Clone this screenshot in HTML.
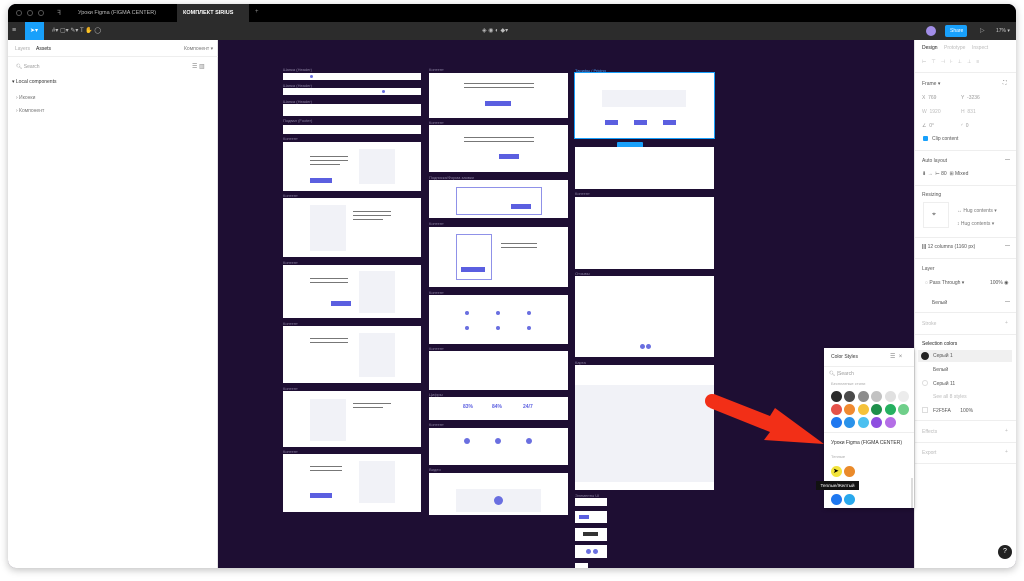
<!DOCTYPE html><html><head><meta charset="utf-8"><style>
*{margin:0;padding:0;box-sizing:border-box}
body{width:1024px;height:581px;background:#fff;position:relative;overflow:hidden;font-family:"Liberation Sans",sans-serif;}
.a{position:absolute}
.win{position:absolute;left:8px;top:4px;width:1008px;height:564px;border-radius:8px;overflow:hidden;background:#1e0e33;box-shadow:0 2px 8px rgba(0,0,0,.25)}
.t{font-size:5px;color:#333;white-space:nowrap}
.lb{position:absolute;font-size:4px;color:#8a80a0;white-space:nowrap}
.fr{position:absolute;background:#fff}
.ph{position:absolute;background:#f1f2f7}
.bt{position:absolute;background:#5b5fe0}
.ln{position:absolute;background:#777;height:1px}
.c{position:absolute;width:11px;height:11px;border-radius:50%}
.rp .t{color:#555}
</style></head><body>
<div class="win">
 <div class="a" style="left:0;top:0;width:1008px;height:18px;background:#000"></div>
 <div class="a" style="left:8px;top:6px;width:6px;height:6px;border:1px solid #555;border-radius:50%"></div>
 <div class="a" style="left:19px;top:6px;width:6px;height:6px;border:1px solid #555;border-radius:50%"></div>
 <div class="a" style="left:30px;top:6px;width:6px;height:6px;border:1px solid #555;border-radius:50%"></div>
 <div class="a t" style="left:49px;top:5px;color:#888;font-size:7px">ꟻ</div>
 <div class="a t" style="left:70px;top:6px;color:#bbb;font-size:5.5px">Уроки Figma (FIGMA CENTER)</div>
 <div class="a" style="left:169px;top:0;width:72px;height:18px;background:#2c2c2c"></div>
 <div class="a t" style="left:175px;top:6px;color:#fff;font-size:5.5px;font-weight:bold">КОМПЛЕКТ SIRIUS</div>
 <div class="a t" style="left:247px;top:5px;color:#888;font-size:6px">+</div>
 <div class="a" style="left:0;top:18px;width:1008px;height:18px;background:#2c2c2c"></div>
 <div class="a t" style="left:4px;top:23px;color:#ccc;font-size:7px">≡</div>
 <div class="a" style="left:17px;top:18px;width:19px;height:18px;background:#18a0fb"></div>
 <div class="a t" style="left:22px;top:23px;color:#fff;font-size:6px">➤▾</div>
 <div class="a t" style="left:44px;top:23px;color:#bbb;font-size:6px">#▾ ▢▾ ✎▾ T ✋ ◯</div>
 <div class="a t" style="left:474px;top:23px;color:#bbb;font-size:6px">◈ ◉ ◐ ◆▾</div>
 <div class="a" style="left:918px;top:22px;width:10px;height:10px;border-radius:50%;background:#a28ee8"></div>
 <div class="a" style="left:937px;top:21px;width:22px;height:12px;border-radius:2px;background:#18a0fb"></div>
 <div class="a t" style="left:942px;top:24px;color:#fff;font-size:5px">Share</div>
 <div class="a t" style="left:972px;top:23px;color:#aaa;font-size:6px">▷</div>
 <div class="a t" style="left:988px;top:24px;color:#ccc;font-size:5px">17% ▾</div>
 <div class="a" style="left:0;top:36px;width:210px;height:528px;background:#fff;border-right:1px solid #e5e5e5"></div>
 <div class="a t" style="left:7px;top:42px;color:#aaa">Layers</div>
 <div class="a t" style="left:28px;top:42px;color:#222">Assets</div>
 <div class="a t" style="left:176px;top:42px;color:#777">Компонент ▾</div>
 <div class="a" style="left:0;top:52px;width:210px;height:1px;background:#eee"></div>
 <div class="a t" style="left:8px;top:60px;color:#999">🔍︎ Search</div>
 <div class="a t" style="left:184px;top:59px;color:#888;font-size:6px">☰ ▥</div>
 <div class="a t" style="left:4px;top:75px;color:#333">▾ Local components</div>
 <div class="a t" style="left:8px;top:91px;color:#777">› Иконки</div>
 <div class="a t" style="left:8px;top:104px;color:#777">› Компонент</div>
 <div class="a rp" style="left:906px;top:36px;width:102px;height:528px;background:#fff;border-left:1px solid #e5e5e5">
  <div class="a t" style="left:7px;top:5px;color:#222">Design</div>
  <div class="a t" style="left:29px;top:5px;color:#bbb">Prototype</div>
  <div class="a t" style="left:57px;top:5px;color:#bbb">Inspect</div>
  <div class="a t" style="left:7px;top:19px;color:#bbb;letter-spacing:5px">⊢⊤⊣⊦⊥⊥≡</div>
  <div class="a" style="left:0;top:32px;width:102px;height:1px;background:#eee"></div>
  <div class="a t" style="left:7px;top:41px">Frame ▾</div><div class="a t" style="left:88px;top:40px">⛶</div>
  <div class="a t" style="left:7px;top:55px;color:#999">X &nbsp;769</div><div class="a t" style="left:46px;top:55px;color:#999">Y &nbsp;-3236</div>
  <div class="a t" style="left:7px;top:69px;color:#bbb">W &nbsp;1920</div><div class="a t" style="left:46px;top:69px;color:#bbb">H &nbsp;831</div>
  <div class="a t" style="left:7px;top:83px;color:#999">∠ &nbsp;0°</div><div class="a t" style="left:46px;top:83px;color:#999">◜ &nbsp;0</div>
  <div class="a" style="left:8px;top:96px;width:5px;height:5px;background:#18a0fb;border-radius:1px"></div>
  <div class="a t" style="left:17px;top:96px">Clip content</div>
  <div class="a" style="left:0;top:110px;width:102px;height:1px;background:#eee"></div>
  <div class="a t" style="left:7px;top:118px">Auto layout</div><div class="a t" style="left:90px;top:117px">—</div>
  <div class="a t" style="left:7px;top:131px">⬇ → &nbsp;⊢ 80 &nbsp;⊞ Mixed</div>
  <div class="a" style="left:0;top:145px;width:102px;height:1px;background:#eee"></div>
  <div class="a t" style="left:7px;top:152px">Resizing</div>
  <div class="a" style="left:8px;top:162px;width:26px;height:26px;border:1px solid #eee"></div>
  <div class="a t" style="left:17px;top:171px;font-size:7px">⌖</div>
  <div class="a t" style="left:42px;top:168px;color:#777">↔ Hug contents ▾</div>
  <div class="a t" style="left:42px;top:181px;color:#777">↕ Hug contents ▾</div>
  <div class="a" style="left:0;top:197px;width:102px;height:1px;background:#eee"></div>
  <div class="a t" style="left:7px;top:204px"><b>|||</b> 12 columns (1160 px)</div><div class="a t" style="left:90px;top:203px">—</div>
  <div class="a" style="left:0;top:218px;width:102px;height:1px;background:#eee"></div>
  <div class="a t" style="left:7px;top:226px">Layer</div>
  <div class="a t" style="left:10px;top:240px">◌ Pass Through ▾</div><div class="a t" style="left:75px;top:240px">100% ◉</div>
  <div class="a t" style="left:17px;top:260px">Белый</div><div class="a t" style="left:90px;top:259px">—</div>
  <div class="a" style="left:0;top:272px;width:102px;height:1px;background:#eee"></div>
  <div class="a t" style="left:7px;top:281px;color:#bbb">Stroke</div><div class="a t" style="left:90px;top:280px;color:#bbb">+</div>
  <div class="a" style="left:0;top:294px;width:102px;height:1px;background:#eee"></div>
  <div class="a t" style="left:7px;top:301px;color:#222">Selection colors</div>
  <div class="a" style="left:3px;top:310px;width:94px;height:12px;background:#f0f0f0"></div>
  <div class="a" style="left:6px;top:312px;width:8px;height:8px;border-radius:50%;background:#222"></div>
  <div class="a t" style="left:18px;top:313px">Серый 1</div>
  <div class="a t" style="left:18px;top:327px">Белый</div>
  <div class="a" style="left:7px;top:340px;width:6px;height:6px;border:1px solid #ddd;border-radius:50%"></div>
  <div class="a t" style="left:18px;top:341px">Серый 11</div>
  <div class="a t" style="left:18px;top:354px;color:#bbb">See all 8 styles</div>
  <div class="a" style="left:7px;top:367px;width:6px;height:6px;border:1px solid #ddd"></div>
  <div class="a t" style="left:18px;top:368px">F2F5FA &nbsp;&nbsp;&nbsp;&nbsp;&nbsp;&nbsp;100%</div>
  <div class="a" style="left:0;top:380px;width:102px;height:1px;background:#eee"></div>
  <div class="a t" style="left:7px;top:389px;color:#bbb">Effects</div><div class="a t" style="left:90px;top:388px;color:#bbb">+</div>
  <div class="a" style="left:0;top:402px;width:102px;height:1px;background:#eee"></div>
  <div class="a t" style="left:7px;top:410px;color:#bbb">Export</div><div class="a t" style="left:90px;top:409px;color:#bbb">+</div>
  <div class="a" style="left:0;top:423px;width:102px;height:1px;background:#eee"></div>
  <div class="a" style="left:83px;top:505px;width:14px;height:14px;border-radius:50%;background:#222;color:#fff;font-size:7px;text-align:center;line-height:14px">?</div>
 </div>
</div>

<div class="a" style="left:0;top:0">
 <!-- column 1 -->
 <div class="lb" style="left:283px;top:67px">Шапка (Header)</div><div class="fr" style="left:283px;top:73px;width:138px;height:7px"><div class="c" style="left:27px;top:2px;width:3px;height:3px;background:#6a6fe0"></div></div>
 <div class="lb" style="left:283px;top:83px">Шапка (Header)</div><div class="fr" style="left:283px;top:88px;width:138px;height:7px"><div class="c" style="left:99px;top:2px;width:3px;height:3px;background:#6a6fe0"></div></div>
 <div class="lb" style="left:283px;top:99px">Шапка (Header)</div><div class="fr" style="left:283px;top:104px;width:138px;height:12px"></div>
 <div class="lb" style="left:283px;top:118px">Подвал (Footer)</div><div class="fr" style="left:283px;top:125px;width:138px;height:9px"></div>
 <div class="lb" style="left:283px;top:136px">Контент</div>
 <div class="fr" style="left:283px;top:142px;width:138px;height:49px"><div class="ph" style="left:76px;top:7px;width:36px;height:35px"></div><div class="ln" style="left:27px;top:14px;width:38px"></div><div class="ln" style="left:27px;top:18px;width:38px"></div><div class="ln" style="left:27px;top:22px;width:30px"></div><div class="bt" style="left:27px;top:36px;width:22px;height:5px"></div></div>
 <div class="lb" style="left:283px;top:193px">Контент</div>
 <div class="fr" style="left:283px;top:198px;width:138px;height:59px"><div class="ph" style="left:27px;top:7px;width:36px;height:46px"></div><div class="ln" style="left:70px;top:13px;width:38px"></div><div class="ln" style="left:70px;top:17px;width:38px"></div><div class="ln" style="left:70px;top:21px;width:30px"></div></div>
 <div class="lb" style="left:283px;top:260px">Контент</div>
 <div class="fr" style="left:283px;top:265px;width:138px;height:53px"><div class="ph" style="left:76px;top:6px;width:36px;height:42px"></div><div class="ln" style="left:27px;top:13px;width:38px"></div><div class="ln" style="left:27px;top:17px;width:38px"></div><div class="bt" style="left:48px;top:36px;width:20px;height:5px"></div></div>
 <div class="lb" style="left:283px;top:321px">Контент</div>
 <div class="fr" style="left:283px;top:326px;width:138px;height:57px"><div class="ph" style="left:76px;top:7px;width:36px;height:44px"></div><div class="ln" style="left:27px;top:12px;width:38px"></div><div class="ln" style="left:27px;top:16px;width:38px"></div></div>
 <div class="lb" style="left:283px;top:386px">Контент</div>
 <div class="fr" style="left:283px;top:391px;width:138px;height:56px"><div class="ph" style="left:27px;top:8px;width:36px;height:42px"></div><div class="ln" style="left:70px;top:12px;width:38px"></div><div class="ln" style="left:70px;top:16px;width:30px"></div></div>
 <div class="lb" style="left:283px;top:449px">Контент</div>
 <div class="fr" style="left:283px;top:454px;width:138px;height:58px"><div class="ph" style="left:76px;top:7px;width:36px;height:42px"></div><div class="ln" style="left:27px;top:12px;width:32px"></div><div class="ln" style="left:27px;top:16px;width:32px"></div><div class="bt" style="left:27px;top:39px;width:22px;height:5px"></div></div>
 <!-- column 2 -->
 <div class="lb" style="left:429px;top:67px">Контент</div>
 <div class="fr" style="left:429px;top:73px;width:139px;height:45px"><div class="ln" style="left:35px;top:10px;width:70px"></div><div class="ln" style="left:35px;top:14px;width:70px"></div><div class="bt" style="left:56px;top:28px;width:26px;height:5px"></div></div>
 <div class="lb" style="left:429px;top:120px">Контент</div>
 <div class="fr" style="left:429px;top:125px;width:139px;height:47px"><div class="ln" style="left:35px;top:12px;width:70px"></div><div class="ln" style="left:35px;top:16px;width:70px"></div><div class="bt" style="left:70px;top:29px;width:20px;height:5px"></div></div>
 <div class="lb" style="left:429px;top:175px">Подписка/Форма заявки</div>
 <div class="fr" style="left:429px;top:180px;width:139px;height:38px"><div class="a" style="left:27px;top:7px;width:86px;height:28px;border:1px solid #8f91e8"></div><div class="bt" style="left:82px;top:24px;width:20px;height:5px"></div></div>
 <div class="lb" style="left:429px;top:221px">Контент</div>
 <div class="fr" style="left:429px;top:227px;width:139px;height:60px"><div class="a" style="left:27px;top:7px;width:36px;height:46px;border:1px solid #8f91e8"></div><div class="bt" style="left:32px;top:40px;width:24px;height:5px"></div><div class="ln" style="left:72px;top:16px;width:36px"></div><div class="ln" style="left:72px;top:20px;width:36px"></div></div>
 <div class="lb" style="left:429px;top:290px">Контент</div>
 <div class="fr" style="left:429px;top:295px;width:139px;height:49px"><div class="c" style="left:36px;top:16px;width:4px;height:4px;background:#6a6fe0"></div><div class="c" style="left:67px;top:16px;width:4px;height:4px;background:#6a6fe0"></div><div class="c" style="left:98px;top:16px;width:4px;height:4px;background:#6a6fe0"></div><div class="c" style="left:36px;top:31px;width:4px;height:4px;background:#6a6fe0"></div><div class="c" style="left:67px;top:31px;width:4px;height:4px;background:#6a6fe0"></div><div class="c" style="left:98px;top:31px;width:4px;height:4px;background:#6a6fe0"></div></div>
 <div class="lb" style="left:429px;top:346px">Контент</div>
 <div class="fr" style="left:429px;top:351px;width:139px;height:39px"></div>
 <div class="lb" style="left:429px;top:392px">Цифры</div>
 <div class="fr" style="left:429px;top:397px;width:139px;height:23px"><div class="a" style="left:34px;top:7px;font-size:5px;color:#5b5fe0;font-weight:bold">83%</div><div class="a" style="left:63px;top:7px;font-size:5px;color:#5b5fe0;font-weight:bold">84%</div><div class="a" style="left:94px;top:7px;font-size:5px;color:#5b5fe0;font-weight:bold">24/7</div></div>
 <div class="lb" style="left:429px;top:422px">Контент</div>
 <div class="fr" style="left:429px;top:428px;width:139px;height:37px"><div class="c" style="left:35px;top:10px;width:6px;height:6px;background:#6a6fe0"></div><div class="c" style="left:66px;top:10px;width:6px;height:6px;background:#6a6fe0"></div><div class="c" style="left:97px;top:10px;width:6px;height:6px;background:#6a6fe0"></div></div>
 <div class="lb" style="left:429px;top:467px">Видео</div>
 <div class="fr" style="left:429px;top:473px;width:139px;height:42px"><div class="ph" style="left:27px;top:16px;width:85px;height:23px"></div><div class="c" style="left:65px;top:23px;width:9px;height:9px;background:#6a6fe0"></div></div>
 <!-- column 3 -->
 <div class="lb" style="left:575px;top:68px;color:#4aa3ff">Тарифы / Pricing</div>
 <div class="fr" style="left:575px;top:73px;width:139px;height:65px;outline:1px solid #18a0fb"><div class="ph" style="left:27px;top:17px;width:84px;height:17px"></div><div class="bt" style="left:30px;top:47px;width:13px;height:5px"></div><div class="bt" style="left:59px;top:47px;width:13px;height:5px"></div><div class="bt" style="left:88px;top:47px;width:13px;height:5px"></div></div>
 <div class="a" style="left:617px;top:142px;width:26px;height:6px;background:#18a0fb;border-radius:1px"></div>
 <div class="fr" style="left:575px;top:147px;width:139px;height:42px"></div>
 <div class="lb" style="left:575px;top:191px">Контент</div>
 <div class="fr" style="left:575px;top:197px;width:139px;height:72px"></div>
 <div class="lb" style="left:575px;top:271px">Отзывы</div>
 <div class="fr" style="left:575px;top:276px;width:139px;height:81px"><div class="c" style="left:65px;top:68px;width:5px;height:5px;background:#6a6fe0"></div><div class="c" style="left:71px;top:68px;width:5px;height:5px;background:#6a6fe0"></div></div>
 <div class="lb" style="left:575px;top:360px">Карта</div>
 <div class="fr" style="left:575px;top:365px;width:139px;height:125px"><div class="ph" style="left:0;top:20px;width:139px;height:97px"></div></div>
 <div class="lb" style="left:575px;top:493px">Элементы UI</div>
 <div class="fr" style="left:575px;top:498px;width:32px;height:8px"></div>
 <div class="fr" style="left:575px;top:511px;width:32px;height:12px"><div class="bt" style="left:4px;top:4px;width:10px;height:4px"></div></div>
 <div class="fr" style="left:575px;top:528px;width:32px;height:13px"><div class="a" style="left:8px;top:4px;width:15px;height:4px;background:#333"></div></div>
 <div class="fr" style="left:575px;top:545px;width:32px;height:13px"><div class="c" style="left:11px;top:4px;width:5px;height:5px;background:#6a6fe0"></div><div class="c" style="left:18px;top:4px;width:5px;height:5px;background:#6a6fe0"></div></div>
 <div class="fr" style="left:575px;top:563px;width:13px;height:5px"></div>
</div>

<svg class="a" style="left:700px;top:380px" width="130" height="80" viewBox="0 0 130 80">
 <polygon points="14,14 70,36 75,28 124,64 64,60 70,52 10,28" fill="#f22f17"/>
 <circle cx="12" cy="21" r="7" fill="#f22f17"/>
</svg>

<div class="a" style="left:824px;top:348px;width:90px;height:160px;background:#fff;box-shadow:0 1px 4px rgba(0,0,0,.3)">
 <div class="a t" style="left:7px;top:6px;color:#333">Color Styles</div>
 <div class="a t" style="left:66px;top:5px;color:#888;font-size:6px">☰ &nbsp;×</div>
 <div class="a" style="left:0;top:18px;width:90px;height:1px;background:#eee"></div>
 <div class="a t" style="left:5px;top:23px;color:#999">🔍︎ |Search</div>
 <div class="a t" style="left:7px;top:33px;color:#aaa;font-size:4px">Бесплатные стили</div>
 <div class="c" style="left:7px;top:43px;background:#2a2a2a"></div><div class="c" style="left:20px;top:43px;background:#4a4a4a"></div><div class="c" style="left:34px;top:43px;background:#8c8c8c"></div><div class="c" style="left:47px;top:43px;background:#c2c2c2"></div><div class="c" style="left:61px;top:43px;background:#e0e0e0"></div><div class="c" style="left:74px;top:43px;background:#ececec"></div>
 <div class="c" style="left:7px;top:56px;background:#e5524a"></div><div class="c" style="left:20px;top:56px;background:#f08a30"></div><div class="c" style="left:34px;top:56px;background:#f5c23a"></div><div class="c" style="left:47px;top:56px;background:#1e8f4a"></div><div class="c" style="left:61px;top:56px;background:#25b060"></div><div class="c" style="left:74px;top:56px;background:#6fcf8a"></div>
 <div class="c" style="left:7px;top:69px;background:#1f78f0"></div><div class="c" style="left:20px;top:69px;background:#2a92ea"></div><div class="c" style="left:34px;top:69px;background:#4bc0f0"></div><div class="c" style="left:47px;top:69px;background:#8e4ee0"></div><div class="c" style="left:61px;top:69px;background:#b46ee6"></div>
 <div class="a" style="left:0;top:84px;width:90px;height:1px;background:#eee"></div>
 <div class="a t" style="left:7px;top:92px;color:#333">Уроки Figma (FIGMA CENTER)</div>
 <div class="a t" style="left:7px;top:106px;color:#aaa;font-size:4px">Теплые</div>
 <div class="c" style="left:7px;top:118px;background:#f2e33c"></div><div class="c" style="left:20px;top:118px;background:#ea8a2a"></div>
 <div class="c" style="left:7px;top:146px;background:#1f78f0"></div><div class="c" style="left:20px;top:146px;background:#29a8ec"></div>
 <div class="a" style="left:87px;top:130px;width:2px;height:30px;background:#ddd"></div>
</div>
<div class="a" style="left:816px;top:481px;width:43px;height:9px;background:#111;color:#fff;font-size:4.5px;line-height:9px;text-align:center">Теплые/Желтый</div>
<div class="a" style="left:833px;top:467px;font-size:7px;color:#000">➤</div>
</body></html>
